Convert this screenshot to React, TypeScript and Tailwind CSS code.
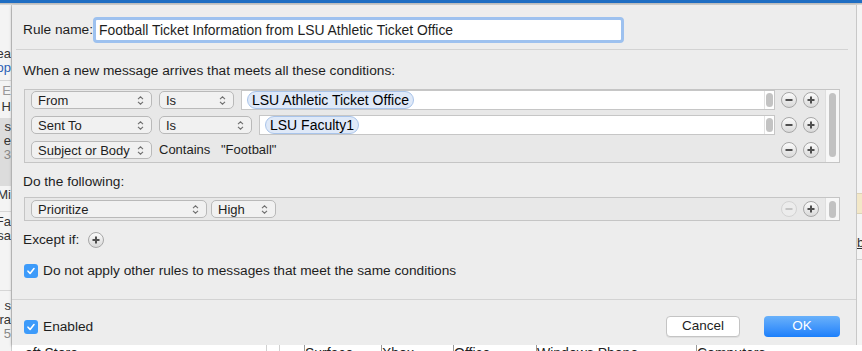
import type { ReactNode } from 'react'

function Chevrons() {
  return (
    <svg width="7" height="11" viewBox="0 0 7 11" className="shrink-0">
      <path d="M1 4.2 L3.5 1.8 L6 4.2" fill="none" stroke="#6f6f6f" strokeWidth="1.1" />
      <path d="M1 6.8 L3.5 9.2 L6 6.8" fill="none" stroke="#6f6f6f" strokeWidth="1.1" />
    </svg>
  )
}

function Popup({ label, className }: { label: string; className: string }) {
  return (
    <div
      className={`h-[18px] shrink-0 flex items-center justify-between pl-[6px] pr-[7px] rounded-[5px] border border-[#b9b9b9] bg-[#f1f1f1] text-[13px] leading-none text-[#1e1e1e] ${className}`}
    >
      <span>{label}</span>
      <Chevrons />
    </div>
  )
}

function RoundButton({ kind, disabled }: { kind: 'plus' | 'minus'; disabled?: boolean }) {
  const stroke = disabled ? '#c4c4c4' : '#4f4f4f'
  return (
    <div
      className={`w-[16px] h-[16px] shrink-0 rounded-full border flex items-center justify-center ${
        disabled ? 'border-[#d3d3d3] bg-[#ececec]' : 'border-[#a7a7a7] bg-gradient-to-b from-[#fbfbfb] to-[#d9d9d9]'
      }`}
    >
      <svg width="10" height="10" viewBox="0 0 10 10">
        <path d="M1.5 5 H8.5" stroke={stroke} strokeWidth="2" />
        {kind === 'plus' && <path d="M5 1.5 V8.5" stroke={stroke} strokeWidth="2" />}
      </svg>
    </div>
  )
}

function RowButtons({ minusDisabled }: { minusDisabled?: boolean }) {
  return (
    <div className="ml-auto flex items-center gap-[6px] pr-[6px]">
      <RoundButton kind="minus" disabled={minusDisabled} />
      <RoundButton kind="plus" />
    </div>
  )
}

function Token({ text }: { text: string }) {
  return (
    <div className="h-[18px] flex items-center px-[4px] rounded-full border border-[#a9c4ea] bg-[#dfe9f8] text-[14px] leading-none text-black whitespace-nowrap">
      {text}
    </div>
  )
}

function TokenField({ children, className }: { children: ReactNode; className: string }) {
  return (
    <div className={`h-[20px] shrink-0 flex items-center bg-white border border-[#c6c6c6] ${className}`}>
      <div className="flex-1 flex items-center pl-[5px]">{children}</div>
      <div className="w-[10px] h-full border-l border-[#e2e2e2] flex items-center justify-center">
        <div className="w-[7px] h-[14px] rounded-full bg-[#c3c3c3]" />
      </div>
    </div>
  )
}

function Check() {
  return (
    <div className="w-[14px] h-[14px] rounded-[3px] bg-[#3d9bfa] flex items-center justify-center shrink-0">
      <svg width="10" height="10" viewBox="0 0 10 10">
        <path d="M2 5.2 L4.1 7.4 L8 2.6" fill="none" stroke="white" strokeWidth="1.6" strokeLinecap="round" strokeLinejoin="round" />
      </svg>
    </div>
  )
}

function Clip({ text, className }: { text: string; className?: string }) {
  return (
    <div className={`flex justify-end overflow-hidden whitespace-nowrap text-[13px] leading-[14px] ${className ?? ''}`}>
      {text}
    </div>
  )
}

export default function App() {
  return (
    <div className="w-[862px] h-[351px] flex flex-col overflow-hidden bg-white font-['Liberation_Sans',Arial,sans-serif] text-[#1e1e1e]">
      <div className="h-[3px] bg-[#1f6ec3] shrink-0" />
      <div className="h-[2px] bg-gradient-to-b from-[#b5b5b5] to-[#e2e2e2] shrink-0" />
      <div className="flex flex-1 min-h-0">
        {/* window behind, left edge */}
        <div className="w-[12px] shrink-0 bg-[#f4f4f4] border-r border-[#cfcfcf] flex flex-col text-[#333]">
          <div className="h-[42px]" />
          <Clip text="Sea" />
          <Clip text="Top" className="text-[#2b5fb4]" />
          <div className="h-[6px] border-b border-[#d6d6d6]" />
          <Clip text="E" className="mt-[3px] text-[#999]" />
          <Clip text="H" className="mt-[2px]" />
          <div className="h-[68px] mt-[4px] bg-[#dcdcdc] flex flex-col pt-[2px]">
            <Clip text="s" />
            <Clip text="e" />
            <Clip text="3" className="text-[#888]" />
          </div>
          <Clip text="Mi" className="mt-[2px]" />
          <div className="h-[10px] border-b border-[#d6d6d6]" />
          <Clip text="Fa" className="mt-[3px]" />
          <Clip text="sa" />
          <div className="h-[48px] border-b border-[#d6d6d6]" />
          <Clip text="s" className="mt-[8px]" />
          <Clip text="ra" />
          <Clip text="5" className="text-[#888]" />
        </div>

        <div className="flex-1 flex flex-col min-w-0">
          <div className="flex flex-1 min-h-0">
            {/* dialog */}
            <div className="w-[845px] shrink-0 bg-[#ededed] border-r border-[#c8c8c8] flex flex-col text-[13.7px] shadow-[0_1px_3px_rgba(0,0,0,0.35)]">
              <div className="flex items-center pt-[12px] pl-[11px]">
                <span className="leading-[16px] w-[70px] whitespace-nowrap">Rule name:</span>
                <div className="w-[531px] h-[26px] rounded-[4px] border-[3px] border-[#9dc1ef] bg-white flex items-center pl-[3px] text-[13.9px]">
                  Football Ticket Information from LSU Athletic Ticket Office
                </div>
              </div>
              <div className="mt-[6px] ml-[4px] mr-[8px] h-px bg-[#d3d3d3]" />
              <div className="mt-[13px] pl-[11px] leading-[16px]">When a new message arrives that meets all these conditions:</div>

              <div className="mt-[10px] ml-[12px] w-[816px] h-[74px] border border-[#c5c5c5] bg-[#e8e8e8] flex">
                <div className="flex-1 flex flex-col gap-[7px] pt-[1px] pl-[6px]">
                  <div className="flex items-center h-[18px]">
                    <Popup label="From" className="w-[121px]" />
                    <Popup label="Is" className="w-[75px] ml-[7px]" />
                    <TokenField className="w-[534px] ml-[7px]">
                      <Token text="LSU Athletic Ticket Office" />
                    </TokenField>
                    <RowButtons />
                  </div>
                  <div className="flex items-center h-[18px]">
                    <Popup label="Sent To" className="w-[121px]" />
                    <Popup label="Is" className="w-[93px] ml-[7px]" />
                    <TokenField className="w-[516px] ml-[7px]">
                      <Token text="LSU Faculty1" />
                    </TokenField>
                    <RowButtons />
                  </div>
                  <div className="flex items-center h-[18px] text-[13px]">
                    <Popup label="Subject or Body" className="w-[121px]" />
                    <span className="ml-[7px] w-[62px]">Contains</span>
                    <span>"Football"</span>
                    <RowButtons />
                  </div>
                </div>
                <div className="w-[14px] bg-[#f7f7f7] border-l border-[#dedede] flex justify-center pt-[3px]">
                  <div className="w-[7px] h-[64px] rounded-full bg-[#c2c2c2]" />
                </div>
              </div>

              <div className="mt-[11px] pl-[11px] leading-[16px]">Do the following:</div>

              <div className="mt-[7px] ml-[12px] w-[816px] h-[24px] border border-[#c5c5c5] bg-[#e8e8e8] flex">
                <div className="flex-1 flex items-center pl-[6px]">
                  <Popup label="Prioritize" className="w-[176px]" />
                  <Popup label="High" className="w-[65px] ml-[4px]" />
                  <RowButtons minusDisabled />
                </div>
                <div className="w-[14px] bg-[#f7f7f7] border-l border-[#dedede] flex items-center justify-center">
                  <div className="w-[7px] h-[17px] rounded-full bg-[#c2c2c2]" />
                </div>
              </div>

              <div className="mt-[11px] pl-[11px] flex items-center h-[16px]">
                <span className="leading-[16px]">Except if:</span>
                <div className="ml-[9px]"><RoundButton kind="plus" /></div>
              </div>

              <div className="mt-[15px] pl-[12px] flex items-center h-[16px] gap-[5px]">
                <Check />
                <span className="leading-[16px]">Do not apply other rules to messages that meet the same conditions</span>
              </div>

              <div className="mt-[20px] h-px bg-[#d3d3d3]" />

              <div className="mt-[16px] h-[21px] flex items-center pl-[12px] pr-[16px]">
                <Check />
                <span className="ml-[5px] leading-[16px]">Enabled</span>
                <div className="ml-auto w-[74px] h-[21px] rounded-[4px] border border-[#c4c4c4] bg-white flex items-center justify-center text-[13.5px] shadow-[0_1px_0_rgba(0,0,0,0.06)]">
                  Cancel
                </div>
                <div className="ml-[24px] w-[76px] h-[21px] rounded-[4px] bg-gradient-to-b from-[#69b1fa] to-[#1a7ffb] text-white flex items-center justify-center text-[13.5px]">
                  OK
                </div>
              </div>
            </div>

            {/* window behind, right edge */}
            <div className="flex-1 bg-[#f4f4f4] flex flex-col">
              <div className="h-[188px]" />
              <div className="h-[21px] bg-[#f3e8c8] border-y border-[#ddd3b6]" />
              <div className="h-[22px]" />
              <div className="text-[13px] leading-[14px] underline text-[#333]">b</div>
              <div className="h-[10px] border-b border-[#cfcfcf]" />
            </div>
          </div>

          {/* window behind, bottom edge */}
          <div className="h-[6px] shrink-0 bg-white overflow-hidden flex text-[14px] leading-[14px] text-[#222] whitespace-nowrap">
            <div className="w-[255px] border-r border-[#d0d0d0] pl-[13px] pt-[1px]">oft Store</div>
            <div className="w-[13px] border-r border-[#d0d0d0]" />
            <div className="w-[24px]" />
            <div className="w-[77px] border-l border-[#9a9a9a] pt-[1px]">Surface</div>
            <div className="w-[72px] border-l border-[#9a9a9a] pt-[1px]">Xbox</div>
            <div className="w-[83px] border-l border-[#9a9a9a] pt-[1px]">Office</div>
            <div className="w-[160px] border-l border-[#9a9a9a] pt-[1px]">Windows Phone</div>
            <div className="w-[120px] border-l border-[#9a9a9a] pt-[1px]">Computers</div>
          </div>
        </div>
      </div>
    </div>
  )
}
